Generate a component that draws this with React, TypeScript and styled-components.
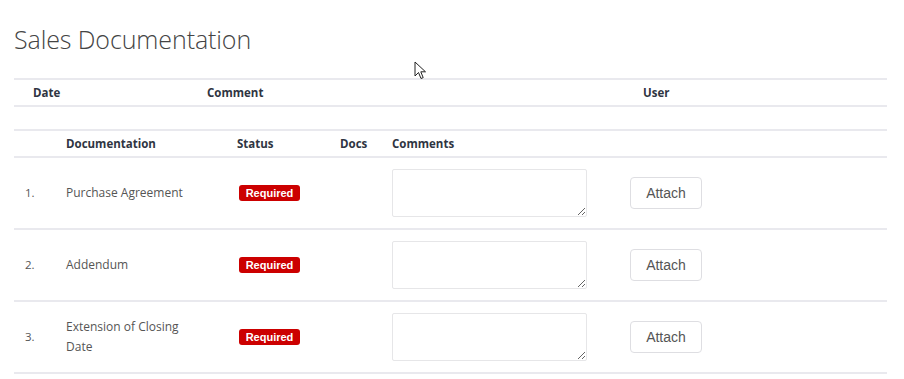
import React from "react";
import styled, { createGlobalStyle } from "styled-components";

const Global = createGlobalStyle`
  html, body { margin: 0; padding: 0; background: #fff; }
  body { font-family: "Open Sans", "Noto Sans", sans-serif; color: #555; }
`;

const Page = styled.div`
  position: relative;
  padding: 23px 17px 0 14px;
`;

const Title = styled.h1`
  margin: 0 0 22px 0;
  font-weight: 300;
  font-size: 25px;
  line-height: 33px;
  color: #444;
  letter-spacing: -0.1px;
`;

const Line = "2px solid #e9e9ee";

const LogGrid = styled.div`
  display: grid;
  grid-template-columns: 193px 436px 1fr;
  border-top: ${Line};
`;

const HeadCell = styled.div<{ $pad?: number }>`
  font-weight: 700;
  font-size: 11.5px;
  color: #2f3542;
  height: 25px;
  display: flex;
  align-items: center;
  padding-left: ${(p) => p.$pad ?? 0}px;
  border-bottom: ${Line};
`;

const EmptyRow = styled.div`
  grid-column: 1 / -1;
  height: 22px;
  border-bottom: ${Line};
`;

const DocGrid = styled.div`
  display: grid;
  grid-template-columns: 52px 171px 103px 52px 238px 1fr;
`;

const Cell = styled.div<{ $pad?: number }>`
  height: 70px;
  display: flex;
  align-items: center;
  padding-left: ${(p) => p.$pad ?? 0}px;
  border-bottom: ${Line};
  font-size: 12px;
  line-height: 20px;
  color: #555;
`;

const Num = styled(Cell)`
  font-size: 11.5px;
`;

const DocName = styled(Cell)`
  padding-right: 40px;
`;

const Badge = styled.span`
  display: inline-block;
  background: #cc0000;
  color: #fff;
  font-family: "Liberation Sans", Arial, sans-serif;
  font-weight: 700;
  font-size: 11px;
  line-height: 16px;
  width: 61px;
  text-align: center;
  border-radius: 3px;
  margin-left: 2px;
`;

const Comment = styled.textarea`
  box-sizing: border-box;
  width: 195px;
  height: 48px;
  border: 1px solid #e6e6e8;
  border-radius: 2px;
  background: #fff;
  font-family: inherit;
  margin: 0;
  resize: vertical;
`;

const AttachButton = styled.button`
  box-sizing: border-box;
  width: 72px;
  height: 32px;
  background: #fff;
  border: 1px solid #dedee2;
  border-radius: 4px;
  color: #555;
  font-family: "Liberation Sans", Arial, sans-serif;
  font-size: 14px;
  padding: 0;
`;

const Cursor = styled.svg`
  position: absolute;
  left: 414px;
  top: 61px;
`;

const docs = ["Purchase Agreement", "Addendum", "Extension of Closing Date"];

export default function App() {
  return (
    <>
      <Global />
      <Page>
        <Title>Sales Documentation</Title>
        <LogGrid>
          <HeadCell $pad={19}>Date</HeadCell>
          <HeadCell>Comment</HeadCell>
          <HeadCell>User</HeadCell>
          <EmptyRow />
        </LogGrid>
        <DocGrid>
          <HeadCell />
          <HeadCell>Documentation</HeadCell>
          <HeadCell>Status</HeadCell>
          <HeadCell>Docs</HeadCell>
          <HeadCell>Comments</HeadCell>
          <HeadCell />
          {docs.map((d, i) => (
            <React.Fragment key={d}>
              <Num $pad={11}>{i + 1}.</Num>
              <DocName>{d}</DocName>
              <Cell>
                <Badge>Required</Badge>
              </Cell>
              <Cell />
              <Cell>
                <Comment />
              </Cell>
              <Cell>
                <AttachButton>Attach</AttachButton>
              </Cell>
            </React.Fragment>
          ))}
        </DocGrid>
        <Cursor width="14" height="20" viewBox="0 0 14 20">
          <path d="M1 1 L1 15 L4.5 11.5 L7 17.5 L9.2 16.6 L6.8 10.8 L11.5 10.8 Z" fill="#fff" stroke="#222" strokeWidth="1" strokeLinejoin="round" />
        </Cursor>
      </Page>
    </>
  );
}
